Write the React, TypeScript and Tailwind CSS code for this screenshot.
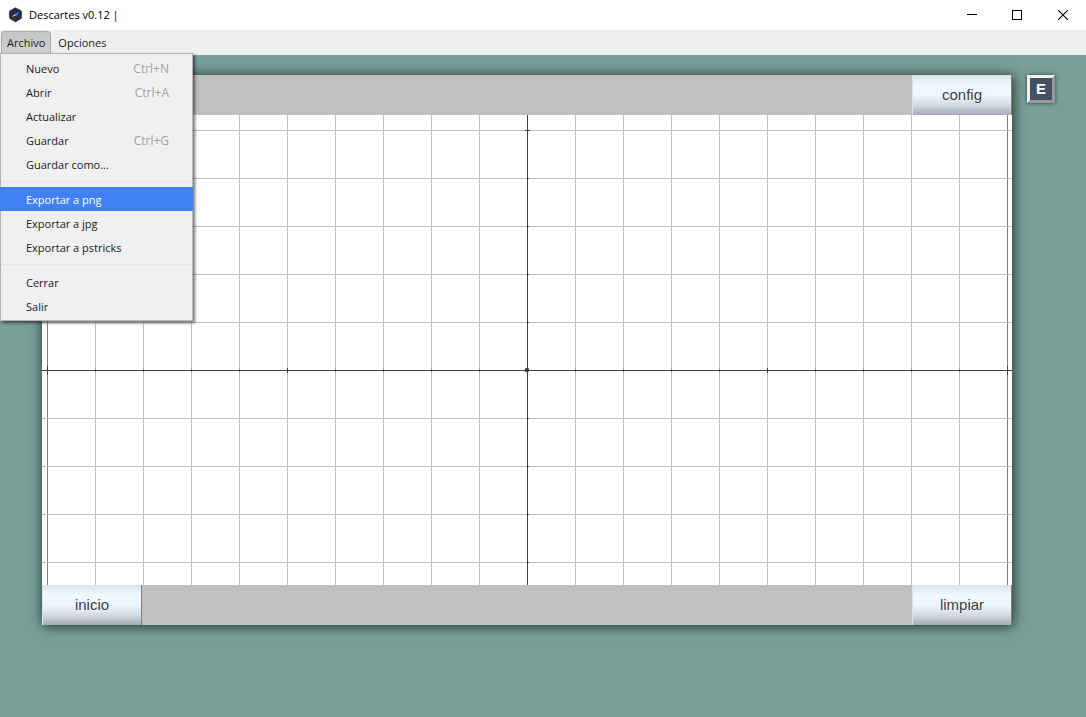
import React from "react";

type Item = { label: string; keys?: string; active?: boolean };

const groups: Item[][] = [
  [
    { label: "Nuevo", keys: "Ctrl+N" },
    { label: "Abrir", keys: "Ctrl+A" },
    { label: "Actualizar" },
    { label: "Guardar", keys: "Ctrl+G" },
    { label: "Guardar como..." },
  ],
  [
    { label: "Exportar a png", active: true },
    { label: "Exportar a jpg" },
    { label: "Exportar a pstricks" },
  ],
  [{ label: "Cerrar" }, { label: "Salir" }],
];

function AppIcon() {
  return (
    <svg width="15" height="16" viewBox="0 0 15 16" aria-hidden="true">
      <path d="M7.5 0.7 L13.6 4 V11.3 L7.5 15 L1.4 11.3 V4 Z" fill="#20242e" stroke="#555a66" strokeWidth="0.7" />
      <circle cx="7.5" cy="7.7" r="6.1" fill="#292e3b" />
      <path d="M3.6 9.8 L7 7 L8.4 8.6 Z" fill="#a9c6df" />
      <path d="M6.5 7.3 L11.8 4.2 L8.5 9 Z" fill="#2684ee" />
    </svg>
  );
}

function TitleBar() {
  return (
    <header className="flex h-[30px] items-center justify-between bg-white pl-2 text-black">
      <div className="flex items-center gap-[6px]">
        <AppIcon />
        <h1 className="text-[11px]">Descartes v0.12 |</h1>
      </div>
      <div className="flex">
        <button aria-label="Minimizar" className="flex h-[30px] w-11 items-center justify-center">
          <svg width="10" height="10" shapeRendering="crispEdges"><path d="M0 4.5H10" stroke="#000" /></svg>
        </button>
        <button aria-label="Maximizar" className="flex h-[30px] w-[46px] items-center justify-center">
          <svg width="10" height="10" shapeRendering="crispEdges"><rect x="0.5" y="0.5" width="9" height="9" fill="none" stroke="#000" /></svg>
        </button>
        <button aria-label="Cerrar ventana" className="flex h-[30px] w-[46px] items-center justify-center">
          <svg width="10" height="10"><path d="M0 0L10 10M10 0L0 10" stroke="#000" strokeWidth="1.1" /></svg>
        </button>
      </div>
    </header>
  );
}

function FileMenu() {
  return (
    <div
      role="menu"
      className="absolute top-[23px] left-0 z-10 w-[193px] border border-[#b5b5b5] bg-[#f0f0f0] py-[2px] shadow-[2px_2px_3px_rgba(0,0,0,0.55)]"
    >
      {groups.map((group, i) => (
        <div key={i} role="group" className={i > 0 ? "mt-[5px] border-t border-[#e5e5e5] pt-[5px]" : ""}>
          {group.map((item) => (
            <button
              key={item.label}
              role="menuitem"
              className={
                item.active
                  ? "-mx-px flex h-6 w-[193px] items-center bg-[#4281f4] pt-[2px] pl-[26px] font-medium text-white"
                  : "flex h-6 w-full items-center justify-between pt-[2px] pr-[23px] pl-[25px]"
              }
            >
              <span>{item.label}</span>
              {item.keys && <span className="text-xs text-[#a3a398]">{item.keys}</span>}
            </button>
          ))}
        </div>
      ))}
    </div>
  );
}

const columns = Array.from({ length: 21 }, (_, i) => i - 10);
const rows = [-5, -4, -3, -2, -1, 0, 1, 2, 3, 4];

function Plot() {
  return (
    <svg
      className="block h-[470px] w-full bg-white"
      viewBox="0 0 970 470"
      preserveAspectRatio="xMidYMid slice"
      shapeRendering="crispEdges"
      role="img"
      aria-label="Plano cartesiano"
    >
      {columns.map((n) => (
        <path key={n} d={`M${485.5 + n * 48} 0V470`} stroke={n % 10 === 0 ? "#808080" : "#c0c0c0"} />
      ))}
      {rows.map((n) => (
        <path key={n} d={`M0 ${255.5 + n * 48}H970`} stroke="#c0c0c0" />
      ))}
      <path d="M0 255.5H970M485.5 0V470" stroke="#404040" />
      {columns.map((n) => {
        const r = n % 10 === 0 ? 4 : n % 5 === 0 ? 2 : 1;
        return <path key={n} d={`M${485.5 + n * 48} ${255 - r}V${256 + r}`} stroke={r === 1 ? "#707070" : "#404040"} />;
      })}
      {rows.map((n) => {
        const r = n % 5 === 0 ? 2 : 1;
        return <path key={n} d={`M${485 - r} ${255.5 + n * 48}H${486 + r}`} stroke={r === 1 ? "#707070" : "#404040"} />;
      })}
      <path d="M0 255.5H970M485.5 0V470" stroke="#404040" />
      <circle cx="485" cy="255" r="2.2" fill="#253b43" shapeRendering="auto" />
    </svg>
  );
}

function PanelButton({ children }: { children: React.ReactNode }) {
  return (
    <button className="h-10 w-[100px] border-r border-l border-r-[#808080] border-l-[#d8e0e8] bg-[linear-gradient(#dbe3ea_0%,#f0f8ff_25%,#eff7fe_50%,#d3dae2_75%,#a7acb2_100%)] font-['Liberation_Sans',Arial,sans-serif] text-[15px] text-[#3c3c3c] [text-shadow:0_0_2px_#fff]">
      {children}
    </button>
  );
}

export default function App() {
  return (
    <div className="flex min-h-screen flex-col bg-[#78a097] font-['Open_Sans','Noto_Sans',sans-serif] text-[11px] text-[#1a1a1a]">
      <TitleBar />
      <nav className="relative flex h-[25px] items-start bg-[#efefef] pt-px pl-px">
        <button className="h-[23px] rounded-t-[3px] border border-[#aaa] bg-linear-to-b from-[#c5c5c5] to-[#d0d0d0] px-[5px] pt-[2px]" aria-haspopup="menu" aria-expanded="true">
          Archivo
        </button>
        <button className="h-[23px] px-[7px] pt-[2px]">Opciones</button>
        <FileMenu />
      </nav>
      <main className="flex flex-1 items-start gap-[15px] pt-5 pr-[31px] pl-[42px]">
        <section className="min-w-0 flex-1 bg-[#c0c0c0] shadow-[1px_1px_12px_rgba(0,0,0,0.75)]">
          <div className="flex justify-end">
            <PanelButton>config</PanelButton>
          </div>
          <Plot />
          <div className="flex justify-between">
            <PanelButton>inicio</PanelButton>
            <PanelButton>limpiar</PanelButton>
          </div>
        </section>
        <button className="flex size-7 items-center justify-center border-[3px] border-t-[#efefef] border-r-[#9a9a9a] border-b-[#9a9a9a] border-l-[#efefef] bg-[#435061] font-['Liberation_Sans',Arial,sans-serif] text-[15px] font-bold text-white shadow-[0_0_4px_rgba(0,0,0,0.6)]">
          E
        </button>
      </main>
    </div>
  );
}
